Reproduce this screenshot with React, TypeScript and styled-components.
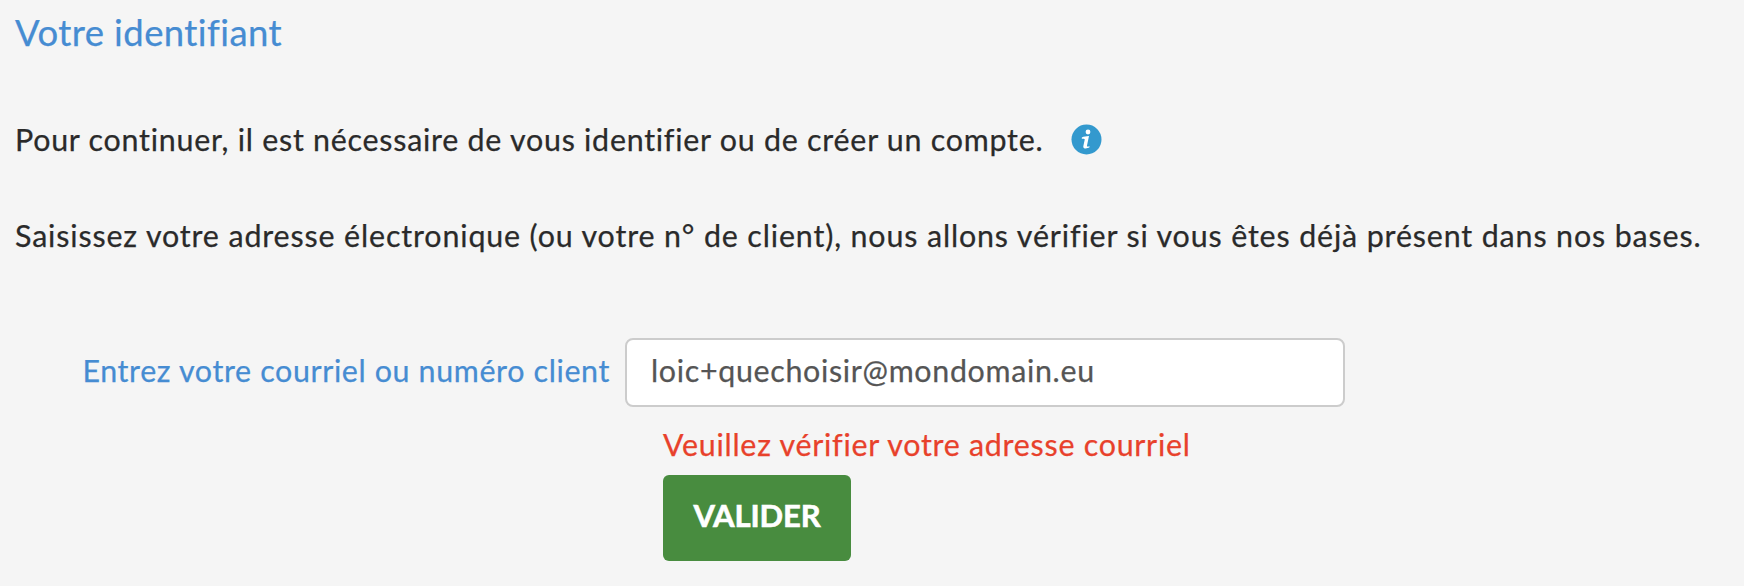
import React, { useState } from "react";
import styled, { createGlobalStyle } from "styled-components";

const GlobalStyle = createGlobalStyle`
  * { box-sizing: border-box; }
  body {
    margin: 0;
    background: #f5f5f5;
    color: #2a2a2a;
    font-family: Lato, "Liberation Sans", sans-serif;
    font-size: 30.4px;
    line-height: 40px;
    -webkit-text-stroke: 0.25px currentColor;
  }
`;

const Page = styled.main`
  height: 586px;
  padding: 12px 15px 0;
  overflow: hidden;
  white-space: nowrap;
`;

const Title = styled.h1`
  margin: 0;
  color: #468cd2;
  font-size: 36.5px;
  font-weight: 400;
  line-height: 40px;
  letter-spacing: 0.42px;
`;

const Paragraph = styled.p<{ $gap: number; $spacing: number }>`
  display: flex;
  align-items: center;
  height: 40px;
  margin: ${(p) => p.$gap}px 0 0;
  letter-spacing: ${(p) => p.$spacing}px;
`;

const InfoIcon = styled.svg`
  flex: none;
  width: 31px;
  height: 31px;
  margin: 1px 0 0 28px;
`;

const Form = styled.form`
  margin-top: 83px;
`;

const Field = styled.div`
  display: flex;
  align-items: center;
  height: 69px;
`;

const Label = styled.label`
  width: 595px;
  flex: none;
  padding-bottom: 5px;
  text-align: right;
  color: #468cd2;
  letter-spacing: 0.64px;
`;

const Input = styled.input`
  width: 720px;
  height: 69px;
  margin-left: 15px;
  padding: 0 24px 5px 24px;
  border: 2px solid #ccc;
  border-radius: 8px;
  outline: none;
  background: #fff;
  color: #555;
  font: inherit;
  letter-spacing: 0.68px;
`;

const Feedback = styled.div`
  display: flex;
  flex-direction: column;
  align-items: flex-start;
  padding: 17px 0 0 648px;
`;

const ErrorText = styled.p`
  margin: 0;
  color: #e8412b;
  letter-spacing: 0.74px;
`;

const Submit = styled.button`
  width: 188px;
  height: 86px;
  margin-top: 11px;
  padding: 0 0 6px;
  border: 0;
  border-radius: 6px;
  background: #488c3f;
  color: #fff;
  font: inherit;
  font-size: 31px;
  font-weight: 700;
  letter-spacing: -0.1px;
  -webkit-text-stroke: 0.6px #fff;
`;

export default function App() {
  const [value, setValue] = useState("loic+quechoisir@mondomain.eu");
  return (
    <>
      <GlobalStyle />
      <Page>
        <Title>Votre identifiant</Title>
        <Paragraph $gap={67} $spacing={0.75}>
          Pour continuer, il est nécessaire de vous identifier ou de créer un compte.
          <InfoIcon viewBox="0 0 31 31" aria-label="Information">
            <circle cx="15.5" cy="15.5" r="15" fill="#3399ce" />
            <circle cx="17" cy="8" r="2.4" fill="#fff" />
            <path
              d="M10.8 13.6C13 12.6 15 12.2 18 12.1L16 21.4C15.7 22.8 16.6 22.8 18.6 22.3L18.3 23.6C16.4 24.6 11.8 25.4 12.3 22.2L13.7 15.8C13.9 14.7 12.8 14.7 10.8 14.8Z"
              fill="#fff"
            />
          </InfoIcon>
        </Paragraph>
        <Paragraph $gap={56} $spacing={0.86}>
          Saisissez votre adresse électronique (ou votre n° de client), nous allons vérifier si vous êtes déjà présent dans nos bases.
        </Paragraph>
        <Form onSubmit={(e) => e.preventDefault()}>
          <Field>
            <Label htmlFor="identifiant">Entrez votre courriel ou numéro client</Label>
            <Input id="identifiant" value={value} onChange={(e) => setValue(e.target.value)} />
          </Field>
          <Feedback>
            <ErrorText>Veuillez vérifier votre adresse courriel</ErrorText>
            <Submit type="submit">VALIDER</Submit>
          </Feedback>
        </Form>
      </Page>
    </>
  );
}
